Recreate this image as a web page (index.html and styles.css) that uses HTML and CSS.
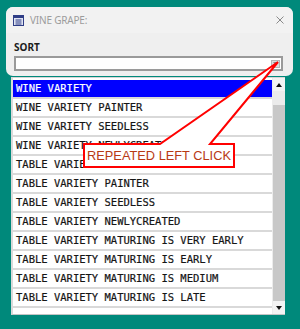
FILE: index.html
```html
<!DOCTYPE html>
<html lang="en">

<head>
    <meta charset="UTF-8">
    <meta name="viewport" content="width=device-width, initial-scale=1.0">
    <title>Vine Grape</title>
    <link rel="stylesheet" href="styles.css">
</head>

<body>
    <div class="dialog">
        <div class="title-bar">
            <svg class="app-icon" width="11" height="11" viewBox="0 0 11 11">
                <rect x="0.5" y="0.5" width="10" height="10" fill="#dfe3f2" stroke="#2f3d86"/>
                <rect x="1" y="1" width="9" height="2" fill="#2f3d86"/>
                <rect x="2.5" y="4.5" width="6" height="1" fill="#2f3d86"/>
                <rect x="2.5" y="6.5" width="6" height="1" fill="#2f3d86"/>
                <rect x="2.5" y="8.5" width="6" height="1" fill="#2f3d86"/>
            </svg>
            <span class="title">VINE GRAPE:</span>
            <svg class="close" width="8" height="8" viewBox="0 0 8 8">
                <path d="M0.5 0.5 L7.5 7.5 M7.5 0.5 L0.5 7.5" stroke="#8a8a8a" stroke-width="1"/>
            </svg>
        </div>
        <div class="dialog-body">
            <div class="field-label">SORT</div>
            <div class="combo">
                <div class="combo-btn">
                    <svg width="5" height="3" viewBox="0 0 5 3"><path d="M0 0 H5 L2.5 3 Z" fill="#8a8a8a"/></svg>
                </div>
            </div>
        </div>
    </div>

    <div class="popup">
        <ul class="options">
            <li class="option selected">WINE VARIETY</li>
            <li class="option">WINE VARIETY PAINTER</li>
            <li class="option">WINE VARIETY SEEDLESS</li>
            <li class="option">WINE VARIETY NEWLYCREATED</li>
            <li class="option">TABLE VARIETY</li>
            <li class="option">TABLE VARIETY PAINTER</li>
            <li class="option">TABLE VARIETY SEEDLESS</li>
            <li class="option">TABLE VARIETY NEWLYCREATED</li>
            <li class="option">TABLE VARIETY MATURING IS VERY EARLY</li>
            <li class="option">TABLE VARIETY MATURING IS EARLY</li>
            <li class="option">TABLE VARIETY MATURING IS MEDIUM</li>
            <li class="option">TABLE VARIETY MATURING IS LATE</li>
        </ul>
        <div class="scrollbar">
            <div class="sb-btn">
                <svg width="6" height="4" viewBox="0 0 6 4"><path d="M3 0 L6 4 H0 Z" fill="#111"/></svg>
            </div>
            <div class="sb-thumb"></div>
            <div class="sb-track"></div>
            <div class="sb-btn">
                <svg width="6" height="4" viewBox="0 0 6 4"><path d="M0 0 H6 L3 4 Z" fill="#111"/></svg>
            </div>
        </div>
    </div>

    <!-- annotation callout drawn over the screenshot -->
    <div class="callout">
        <svg class="callout-shape" width="300" height="329" viewBox="0 0 300 329">
            <path d="M84 144 H160 L278 62 L210 144 H234 V167 H84 Z" fill="#fff" stroke="#f00" stroke-width="2" stroke-linejoin="miter"/>
        </svg>
        <div class="callout-text">REPEATED LEFT CLICK</div>
    </div>
</body>

</html>
```

FILE: styles.css
```css
body {
    margin: 0;
    width: 300px;
    height: 329px;
    overflow: hidden;
    position: relative;
    background-color: #00897b;
    font-family: "Noto Sans", sans-serif;
}

.dialog {
    margin: 7px 0 0 6px;
    width: 287px;
    height: 69px;
    background-color: #efefef;
    border-radius: 7px;
    overflow: hidden;
}

.title-bar {
    height: 26px;
    display: flex;
    align-items: center;
    padding: 0 9px 0 7px;
    background-color: #f2f2f2;
}

.app-icon {
    display: block;
    margin-right: 6px;
}

.title {
    flex: 1;
    font-size: 10px;
    letter-spacing: -0.2px;
    color: #9c9c9c;
}

.close {
    display: block;
}

.dialog-body {
    padding: 8px 10px 0 8px;
}

.field-label {
    font-size: 10px;
    font-weight: bold;
    line-height: 13px;
    color: #1c1c1c;
}

.combo {
    margin-top: 2px;
    height: 15px;
    box-sizing: border-box;
    border: 2px solid #9a9a9a;
    background-color: #fff;
    display: flex;
    justify-content: flex-end;
    align-items: center;
    padding-right: 1px;
}

.combo-btn {
    width: 9px;
    height: 8px;
    box-sizing: border-box;
    background-color: #dcdcdc;
    border: 1px solid #b4b4b4;
    display: flex;
    align-items: center;
    justify-content: center;
}

.combo-btn svg {
    display: block;
}

.popup {
    margin: 1px 0 0 11px;
    width: 274px;
    height: 238px;
    box-sizing: border-box;
    display: flex;
    background-color: #fff;
    border-left: 2px solid #dadada;
    border-top: 1px solid #d6d6d6;
    border-bottom: 1px solid #c4c4c4;
}

.options {
    flex: 1;
    list-style: none;
    margin: 0;
    padding: 2px 0 0 0;
}

.option {
    height: 19px;
    box-sizing: border-box;
    padding-left: 3px;
    border-bottom: 2px solid #d9d9d9;
    font-family: "DejaVu Sans Mono", monospace;
    font-size: 10.5px;
    line-height: 17px;
    color: #151515;
    -webkit-text-stroke: 0.2px #151515;
    white-space: nowrap;
    overflow: hidden;
}

.option.selected {
    background-color: #0000ff;
    color: #fff;
    -webkit-text-stroke: 0.2px #fff;
}

.scrollbar {
    width: 13px;
    display: flex;
    flex-direction: column;
    border-left: 1px solid #ececec;
    box-sizing: border-box;
}

.sb-btn {
    height: 13px;
    display: flex;
    align-items: center;
    justify-content: center;
    background-color: #f3f3f3;
}

.sb-btn svg {
    display: block;
}

.sb-thumb {
    height: 14px;
    background-color: #ebebeb;
}

.sb-track {
    flex: 1;
    background-color: #c8c8c8;
}

.callout {
    position: absolute;
    left: 0;
    top: 0;
    width: 300px;
    height: 329px;
    pointer-events: none;
}

.callout-shape {
    position: absolute;
    left: 0;
    top: 0;
}

.callout-text {
    position: absolute;
    left: 84px;
    top: 144px;
    width: 150px;
    height: 23px;
    display: flex;
    align-items: center;
    justify-content: center;
    font-family: "Liberation Sans", Arial, sans-serif;
    font-size: 12.8px;
    color: #b83a14;
}
```
